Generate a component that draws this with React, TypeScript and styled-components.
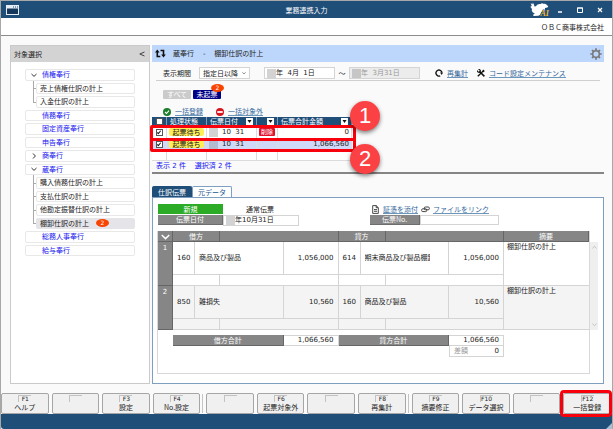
import React from "react";
import styled, { createGlobalStyle, css } from "styled-components";

const navy = "#1f4e79";
const grey = "#868686";
const line = "#d4d4d4";
const red = "#f8000c";
const sans = '"DejaVu Sans", "Noto Sans CJK JP", sans-serif';
const cjk = '"Noto Sans CJK JP", sans-serif';

const GlobalStyle = createGlobalStyle`
  *, *::before, *::after { box-sizing: border-box; }
  html, body { margin: 0; }
  body { font: 7px/10px ${cjk}; color: #222; background: #fafafa; }
  button, input, select { font: inherit; color: inherit; margin: 0; padding: 0; border: 0; border-radius: 0; background: none; }
  ul { list-style: none; margin: 0; padding: 0; }
  table { border-collapse: separate; border-spacing: 0; table-layout: fixed; }
  th, td { padding: 0; font-weight: 400; }
  svg { display: block; flex: none; }
`;

const Shell = styled.div`
  min-height: 100vh;
  display: flex;
  flex-direction: column;
  border: solid #a8a8a8;
  border-width: 1px 1px 0;
  background: #fafafa;
`;

const TitleBar = styled.header`
  display: grid;
  grid-template-columns: 1fr auto 1fr;
  align-items: center;
  height: 17px;
  padding: 0 2px;
  background: ${navy};
  color: #fff;
`;

const AppMark = styled.span`
  padding-left: 3px;
`;

const Title = styled.h1`
  margin: 0;
  font: inherit;
`;

const WindowTools = styled.div`
  display: flex;
  justify-content: flex-end;
  align-items: center;
`;

const WindowButton = styled.button`
  display: grid;
  place-items: center;
  width: 20px;
  height: 12px;
`;

const CompanyBar = styled.div`
  height: 18px;
  padding: 4px 8px 0;
  text-align: right;
  background: #fff;
  border-bottom: 1px solid #8c8c8c;
`;

const Main = styled.main`
  flex: 1;
  display: flex;
  gap: 2px;
  padding: 9px 8px 9px 9px;
`;

const Sidebar = styled.nav`
  width: 140px;
  border: 1px solid #cacaca;
  background: #fff;
`;

const SidebarHead = styled.div`
  display: flex;
  justify-content: space-between;
  align-items: center;
  height: 16px;
  padding: 0 4px 0 3px;
  background: #d3d3d3;
`;

const Tree = styled.ul`
  display: grid;
  grid-auto-rows: 1fr;
  gap: 2px;
  height: 187px;
  margin: 7px 14px 0;
`;

const TreeItem = styled.li<{ $child: boolean; $first: boolean }>`
  position: relative;
  display: flex;
  ${(p) =>
    p.$child &&
    css`
      margin-left: 11px;
      &::before {
        content: "";
        position: absolute;
        left: -3px;
        top: ${p.$first ? "-2px" : "-7px"};
        bottom: 5px;
        width: 3px;
        border: solid #aaa;
        border-width: 0 0 1px 1px;
      }
    `}
`;

const TreeButton = styled.button<{ $child: boolean; $active: boolean }>`
  flex: 1;
  display: flex;
  align-items: center;
  gap: ${(p) => (p.$child ? "7px" : "0")};
  padding-left: ${(p) => (p.$child ? "3px" : "5px")};
  border: 1px solid ${(p) => (p.$active ? "#e4e4e9" : "#e8e8e8")};
  border-radius: 2px;
  background: ${(p) => (p.$active ? "#e4e4e9" : "#fff")};
  color: ${(p) => (p.$child ? "#222" : "#1414f0")};
  text-align: left;
  line-height: 9px;
  white-space: nowrap;
`;

const TreeMark = styled.span`
  width: 11px;
`;

const Badge = styled.span`
  width: 13px;
  height: 8px;
  border-radius: 50%;
  background: #f84400;
  color: #fff;
  font-family: ${sans};
  font-size: 6px;
  line-height: 8px;
  text-align: center;
`;

const TabBadge = styled(Badge)`
  position: absolute;
  right: -3px;
  top: -6px;
`;

const Work = styled.section`
  flex: 1;
  min-width: 0;
  display: flex;
  flex-direction: column;
`;

const WorkHead = styled.div`
  display: flex;
  align-items: center;
  height: 17px;
  padding: 0 2px 0 3px;
  background: #bdd7fc;
`;

const WorkTitle = styled.h2`
  flex: 1;
  margin: 0 7px;
  font: inherit;
  font-family: ${sans};
  white-space: pre;
`;

const Filter = styled.div`
  display: flex;
  align-items: center;
  margin: 0 4px;
  padding: 5px 0 1px 7px;
  border-bottom: 1px solid #cfcfcf;
`;

const SelectBox = styled.span`
  display: flex;
  align-items: center;
  width: 51px;
  height: 12px;
  margin: 0 14px 0 8px;
  padding-right: 3px;
  border: 1px solid ${line};
  background: #fff;
`;

const Select = styled.select`
  flex: 1;
  min-width: 0;
  height: 10px;
  padding-left: 3px;
  appearance: none;
  outline: none;
`;

const DateBox = styled.span<{ $off?: boolean; $w: number; $h?: number }>`
  display: flex;
  align-items: center;
  width: ${(p) => p.$w}px;
  height: ${(p) => p.$h ?? 12}px;
  padding: 0 2px;
  border: 1px solid ${line};
  background: ${(p) => (p.$off ? "#ececec" : "#fff")};
  color: ${(p) => (p.$off ? "#999" : "#222")};
`;

const Mask = styled.span`
  flex: none;
  width: 9px;
  height: 9px;
  background: rgba(120, 120, 125, 0.33);
`;

const TextInput = styled.input`
  flex: 1;
  min-width: 0;
  width: 100%;
  height: 10px;
  font-family: ${sans};
  outline: none;
`;

const Wave = styled.span`
  width: 14px;
  text-align: center;
`;

const IconLink = styled.a<{ $gap?: number }>`
  display: inline-flex;
  align-items: center;
  gap: ${(p) => p.$gap ?? 4}px;
  color: #33689c;
  text-decoration: none;
  white-space: nowrap;
  span { border-bottom: 1px solid #6d96bb; line-height: 8px; }
`;

const FilterLinks = styled.div`
  display: flex;
  gap: 9px;
  margin-left: 15px;
`;

const StatusTabs = styled.div`
  display: flex;
  gap: 2px;
  margin: 9px 0 0 11px;
`;

const StatusTab = styled.button<{ $on?: boolean }>`
  position: relative;
  width: 28px;
  height: 9px;
  border-radius: 1px;
  background: ${(p) => (p.$on ? "#000087" : "#cbcbcb")};
  color: #fff;
  line-height: 9px;
`;

const Actions = styled.div`
  display: flex;
  gap: 13px;
  height: 11px;
  margin: 7px 0 0 11px;
`;

const ListArea = styled.div`
  border-bottom: 2px solid #858585;
`;

const ListWrap = styled.div`
  position: relative;
  width: 200px;
`;

const List = styled.table`
  width: 100%;
  font-family: ${sans};
`;

const ListTh = styled.th`
  height: 9px;
  padding: 0 3px;
  overflow: hidden;
  background: ${navy};
  color: #fff;
  font-family: ${cjk};
  line-height: 9px;
  text-align: left;
  border-right: 1px solid #7f9cb8;
`;

const ThRow = styled.span`
  display: flex;
  align-items: center;
  justify-content: space-between;
  height: 9px;
`;

const FilterButton = styled.button`
  display: grid;
  place-items: center;
  width: 7px;
  height: 7px;
  margin-left: auto;
  background: #fff;
`;

const ListTr = styled.tr<{ $h: number; $on?: boolean }>`
  height: ${(p) => p.$h}px;
  background: ${(p) => (p.$on ? "#cfd8f6" : "#fff")};
`;

const ListTd = styled.td<{ $right?: boolean }>`
  padding: 0 2px;
  border-right: 1px solid #dcdcdc;
  border-bottom: 1px solid #dcdcdc;
  line-height: 8px;
  text-align: ${(p) => (p.$right ? "right" : "left")};
`;

const Check = styled.input`
  display: block;
  appearance: none;
  position: relative;
  width: 7px;
  height: 7px;
  margin: 0 auto;
  border: 1px solid #555;
  background: #fff;
  &:checked::before {
    content: "";
    position: absolute;
    left: 1px;
    top: 0;
    width: 2px;
    height: 4px;
    border: solid #111;
    border-width: 0 1px 1px 0;
    transform: rotate(40deg);
  }
`;

const Waiting = styled.span`
  display: block;
  height: 8px;
  border-radius: 2px;
  background: #ffee57;
  font-family: ${cjk};
  line-height: 8px;
  text-align: center;
`;

const Day = styled.span`
  display: flex;
  align-items: center;
  gap: 4px;
  white-space: pre;
`;

const Deleted = styled.span`
  display: block;
  width: 16px;
  height: 8px;
  border-radius: 1px;
  background: #e0122c;
  color: #fff;
  font-family: ${cjk};
  font-size: 6px;
  line-height: 8px;
  text-align: center;
`;

const ListFoot = styled.p`
  margin: 0;
  padding-left: 4px;
  color: #1414f0;
  font-family: ${sans};
  line-height: 11px;
  white-space: pre;
`;

const Highlight = styled.span<{ $top: number; $h: number }>`
  position: absolute;
  left: -2px;
  right: -4px;
  top: ${(p) => p.$top}px;
  height: ${(p) => p.$h}px;
  border: 3px solid ${red};
  border-radius: 2px;
  pointer-events: none;
`;

const Callout = styled.span<{ $top: number }>`
  position: absolute;
  left: 198px;
  top: ${(p) => p.$top}px;
  width: 30px;
  height: 30px;
  border-radius: 50%;
  background: #fb4144;
  box-shadow: 0 2px 4px rgba(0, 0, 0, 0.5);
  color: #fff;
  font: 22px/30px "Liberation Sans", sans-serif;
  text-align: center;
`;

const Tabs = styled.div`
  display: flex;
  margin-top: 12px;
`;

const Tab = styled.button<{ $on?: boolean }>`
  width: 40px;
  height: 11px;
  border: 1px solid ${(p) => (p.$on ? navy : "#7f9fc0")};
  border-bottom: 0;
  border-radius: 2px 2px 0 0;
  background: ${(p) => (p.$on ? navy : "#fff")};
  color: ${(p) => (p.$on ? "#fff" : "#24588f")};
  line-height: 10px;
`;

const Panel = styled.div`
  flex: 1;
  display: flex;
  flex-direction: column;
  padding: 6px 5px 9px 4px;
  border: 1px solid #7f9fc0;
  background: #fff;
`;

const Form = styled.div`
  display: grid;
  grid-template-columns: 65px 76px 1fr 50px 79px 99px;
  grid-auto-rows: 10px;
  row-gap: 1px;
  margin-left: 1px;
  align-items: center;
`;

const Tag = styled.span`
  height: 10px;
  background: #2bab26;
  color: #fff;
  line-height: 10px;
  text-align: center;
`;

const TagLabel = styled.label`
  height: 10px;
  border: solid #6d6d6d;
  border-width: 0 1px 1px 0;
  background: ${grey};
  color: #fff;
  line-height: 9px;
  text-align: center;
`;

const SlipKind = styled.span`
  padding-left: 23px;
`;

const Attach = styled.span`
  grid-column: 4 / -1;
  display: flex;
  gap: 3px;
  padding-left: 2px;
`;

const VoucherNo = styled(TextInput)`
  border: 1px solid ${line};
`;

const DateCell = styled.span`
  grid-column: 2;
  display: flex;
`;

const Spacer = styled.span``;

const Detail = styled.div`
  flex: 1;
  display: flex;
  margin-top: 6px;
`;

const Frame = styled.div`
  flex: 1;
  min-width: 0;
  border: solid #d8d8d8;
  border-width: 0 1px 1px;
`;

const Ledger = styled.table`
  width: 100%;
  font-family: ${sans};
`;

const LedgerTh = styled.th`
  height: 11px;
  border: solid #666;
  border-width: 0 1px 1px 0;
  background: ${grey};
  color: #fff;
  font-family: ${cjk};
  line-height: 10px;
  text-align: center;
  svg { margin: 0 auto; }
`;

const RowNo = styled.th`
  padding-top: 2px;
  border: solid #666;
  border-width: 0 1px 1px 0;
  background: ${grey};
  color: #fff;
  line-height: 8px;
  vertical-align: top;
`;

const Cell = styled.td<{ $right?: boolean; $h?: number }>`
  height: ${(p) => p.$h ?? 33}px;
  padding: 0 4px;
  overflow: hidden;
  border: solid ${line};
  border-width: 0 1px 1px 0;
  text-align: ${(p) => (p.$right ? "right" : "left")};
  white-space: nowrap;
`;

const AccountName = styled.span`
  display: block;
  margin-right: 14px;
  overflow: hidden;
`;

const Note = styled.td`
  padding: 0 3px;
  border-bottom: 1px solid ${line};
  font-family: ${cjk};
  line-height: 9px;
  vertical-align: top;
`;

const Entry = styled.tbody<{ $shade?: boolean }>`
  background: ${(p) => (p.$shade ? "#f4f4f4" : "#fff")};
`;

const Totals = styled.table`
  width: 100%;
  margin-top: 5px;
  font-family: ${sans};
`;

const TotalTd = styled.td<{ $blank?: boolean }>`
  height: 11px;
  padding: 0 4px;
  border: solid ${line};
  border-width: ${(p) => (p.$blank ? "0" : "1px 1px 1px 0")};
  line-height: 9px;
  text-align: right;
`;

const Difference = styled(TotalTd)`
  border-width: 0 1px 1px;
`;

const DiffRow = styled.span`
  display: flex;
  justify-content: space-between;
  span { color: #999; }
`;

const Scrollbar = styled.div`
  display: flex;
  flex-direction: column;
  justify-content: space-between;
  align-items: center;
  width: 8px;
  height: 88px;
  margin-top: 11px;
  padding: 3px 0;
  background: #efefef;
`;

const KeyBar = styled.div`
  display: flex;
  padding: 0 1px 0 0;
`;

const KeyGroup = styled.div`
  flex: 1;
  display: flex;
  gap: 3px;
  & + & {
    margin-left: 6px;
    position: relative;
  }
  & + &::before {
    content: "";
    position: absolute;
    left: -4px;
    top: 1px;
    bottom: 1px;
    border-left: 1px solid #c4c4c4;
  }
`;

const KeySlot = styled.div`
  position: relative;
  flex: 1;
  display: flex;
`;

const Key = styled.button`
  flex: 1;
  display: flex;
  flex-direction: column;
  align-items: center;
  height: 21px;
  padding-top: 1px;
  border: 1px solid #a6a6a6;
  border-radius: 2px;
  background: #f0f0f0;
  line-height: 10px;
`;

const KeyCap = styled.span`
  width: 13px;
  height: 7px;
  border: solid #c2c2c2;
  border-width: 1px 0 0 1px;
  font-family: ${sans};
  font-size: 6px;
  line-height: 6px;
  text-align: center;
`;

const KeyText = styled.span``;

const KeyHighlight = styled.span`
  position: absolute;
  inset: -3px -1px -3px -3px;
  border: 3px solid ${red};
  border-radius: 4px;
  pointer-events: none;
`;

const StatusBar = styled.footer`
  display: flex;
  justify-content: flex-end;
  align-items: flex-end;
  height: 15px;
  background: ${navy};
  border-radius: 0 0 3px 3px;
`;

const Chevron = ({ dir, color = "#333", size = 6, w = 1 }: { dir: "down" | "right" | "left" | "up"; color?: string; size?: number; w?: number }) => {
  const d = { down: "M0.5 2l2.5 2.4L5.500 2", up: "M0.5 4l2.500-2.400L5.500 4", right: "M2 .5l2.400 2.500L2 5.500", left: "M5.500 1L.8 3l4.700 2" }[dir];
  return (
    <svg width={size} height={size} viewBox="0 0 6 6" fill="none" stroke={color} strokeWidth={w}>
      <path d={d} />
    </svg>
  );
};

const AppIcon = () => (
  <svg width="13" height="10" viewBox="0 0 13 10">
    <rect x=".5" y=".5" width="12" height="9" fill="#14395c" stroke="#e6edf4" />
    <path d="M1 1h11v2.500H1z" fill="#e6edf4" />
    <path d="M7 2h1M9 2h1M11 2h1" stroke={navy} />
  </svg>
);

const BearIcon = () => (
  <svg width="20" height="15" viewBox="0 0 20 15">
    <path
      d="M.6 1.200l2 1.100L2.800.6l1.100 2L4.500 4.500 6 4.200C7 2.500 8.500 1.800 10.500 2c1-.9 2.200-1 2.700-.2 1.700-.3 3.200.2 3.700 1.400l1.400.7-.8 1.500-2.500.6c-.2 1.700.2 2.200.3 2.500l-4 1.500-1 2.700-1.900 1-4.600.3-.9-1 1.900-1.400C1.800 10 1.300 8.500 2 7L.3 4.800l1.500-.9z"
      fill="#fff"
    />
    <text
      x="10.500"
      y="14.300"
      fill="#f2b632"
      stroke={navy}
      strokeWidth="1"
      paintOrder="stroke"
      fontFamily="Liberation Serif, serif"
      fontStyle="italic"
      fontWeight="700"
      fontSize="8"
    >
      AI
    </text>
  </svg>
);

const SwapIcon = () => (
  <svg width="11" height="9" viewBox="0 0 11 9" fill="none" stroke="#111" strokeWidth="1.600">
    <path d="M2.300 2.500v5h3M5.500 1.500h3v5" />
    <path d="M0 3.500L2.300.5l2.300 3zM6.200 5.500h4.600L8.500 8.500z" fill="#111" stroke="none" />
  </svg>
);

const GearIcon = () => (
  <svg width="12" height="12" viewBox="0 0 12 12" fill="none" stroke="#777">
    <circle cx="6" cy="6" r="3.300" strokeWidth="1.500" />
    <path
      d="M6 .3v2M6 9.700v2M.3 6h2M9.700 6h2M2 2l1.400 1.400M8.600 8.600L10 10M10 2L8.600 3.400M3.400 8.600L2 10"
      strokeWidth="1.700"
    />
  </svg>
);

const ReloadIcon = () => (
  <svg width="8" height="8" viewBox="0 0 8 8" fill="none" stroke="#111" strokeWidth="1.400">
    <path d="M5.200 6.800A3 3 0 1 1 6.900 3.500" />
    <path d="M5 3.400h3L6.800 6z" fill="#111" stroke="none" />
  </svg>
);

const ToolsIcon = () => (
  <svg width="8" height="8" viewBox="0 0 8 8" fill="none" stroke="#111">
    <path d="M2.300 2.300L7.400 7.400" strokeWidth="1.500" />
    <path d="M.5 1.500a1.600 1.600 0 0 0 2.300 1.700M1.500.5a1.600 1.600 0 0 1 1.700 2.300" strokeWidth="1.100" />
    <path d="M.8 7.300L5 3.200" strokeWidth="1.300" />
    <path d="M4.500 2.500L6.600.4l1.100 1.800L5.600 3.700z" fill="#111" stroke="none" />
  </svg>
);

const OkIcon = () => (
  <svg width="8" height="8" viewBox="0 0 8 8" fill="none">
    <circle cx="4" cy="4" r="4" fill="#1b7e2c" />
    <path d="M2 4l1.500 1.500L6 2.700" stroke="#fff" strokeWidth="1.100" />
  </svg>
);

const StopIcon = () => (
  <svg width="8" height="8" viewBox="0 0 8 8">
    <circle cx="4" cy="4" r="4" fill="#d9141e" />
    <path d="M1.300 3.100h5.400v1.800H1.300z" fill="#fff" />
  </svg>
);

const DocIcon = () => (
  <svg width="7" height="9" viewBox="0 0 7 9" fill="none" stroke="#333" strokeWidth=".9">
    <path d="M.7.600h3.500L6.300 2.700v5.700H.7zM4.200.6v2.100h2.100M2 4.600h3M2 6.300h3" />
  </svg>
);

const ChainIcon = () => (
  <svg width="9" height="7" viewBox="0 0 9 7" fill="none" stroke="#444" strokeWidth="1">
    <rect x="3.300" y="1" width="5" height="2.800" rx="1" />
    <rect x=".7" y="2.800" width="5" height="2.800" rx="1" />
  </svg>
);

const Funnel = ({ name }: { name: string }) => (
  <FilterButton aria-label={name}>
    <svg width="5" height="3" viewBox="0 0 5 3"><path d="M.5 0h4l-2 3z" fill="#111" /></svg>
  </FilterButton>
);

type Node = { text: string; child?: boolean; mark?: "down" | "right"; count?: number };

const nodes: Node[] = [
  { text: "債権奉行", mark: "down" },
  { text: "売上債権仕訳の計上", child: true },
  { text: "入金仕訳の計上", child: true },
  { text: "債務奉行" },
  { text: "固定資産奉行" },
  { text: "申告奉行" },
  { text: "商奉行", mark: "right" },
  { text: "蔵奉行", mark: "down" },
  { text: "購入債務仕訳の計上", child: true },
  { text: "支払仕訳の計上", child: true },
  { text: "他勘定振替仕訳の計上", child: true },
  { text: "棚卸仕訳の計上", child: true, count: 2 },
  { text: "総務人事奉行" },
  { text: "給与奉行" },
];

const entries = [
  { no: 1, debit: ["160", "商品及び製品", "1,056,000"], credit: ["614", "期末商品及び製品棚卸", "1,056,000"], note: "棚卸仕訳の計上" },
  { no: 2, debit: ["850", "雑損失", "10,560"], credit: ["160", "商品及び製品", "10,560"], note: "棚卸仕訳の計上" },
];

const keyGroups = [
  [["F1", "ヘルプ"], ["", ""], ["F3", "設定"], ["F4", "No.設定"]],
  [["", ""], ["F6", "起票対象外"], ["", ""], ["F8", "再集計"]],
  [["F9", "摘要修正"], ["F10", "データ選択"], ["", ""], ["F12", "一括登録"]],
];

const Cols = ({ widths }: { widths: (number | undefined)[] }) => (
  <colgroup>
    {widths.map((w, i) => (
      <col key={i} width={w} />
    ))}
  </colgroup>
);

const SlipRow = ({ height, on, deleted, amount }: { height: number; on?: boolean; deleted?: boolean; amount: string }) => (
  <ListTr $h={height} $on={on}>
    <ListTd><Check type="checkbox" defaultChecked aria-label={`伝票 ${amount}`} /></ListTd>
    <ListTd><Waiting>起票待ち</Waiting></ListTd>
    <ListTd><Day><Mask />10  31</Day></ListTd>
    <ListTd>{deleted && <Deleted>削除</Deleted>}</ListTd>
    <ListTd $right>{amount}</ListTd>
  </ListTr>
);

export default function App() {
  return (
    <Shell>
      <GlobalStyle />
      <TitleBar>
        <AppMark><AppIcon /></AppMark>
        <Title>業務連携入力</Title>
        <WindowTools>
          <BearIcon />
          <WindowButton aria-label="最小化">
            <svg width="6" height="6"><path d="M1 5h4" stroke="#fff" strokeWidth="1.500" /></svg>
          </WindowButton>
          <WindowButton aria-label="最大化">
            <svg width="6" height="6"><path d="M.5 1h5v4.500h-5z" fill="none" stroke="#fff" /><path d="M0 1h6" stroke="#fff" /></svg>
          </WindowButton>
          <WindowButton aria-label="閉じる">
            <svg width="6" height="6"><path d="M1 1l4 4M5 1L1 5" stroke="#fff" strokeWidth="1.200" /></svg>
          </WindowButton>
        </WindowTools>
      </TitleBar>
      <CompanyBar>ＯＢＣ商事株式会社</CompanyBar>

      <Main>
        <Sidebar>
          <SidebarHead>
            対象選択
            <Chevron dir="left" color="#444" />
          </SidebarHead>
          <Tree>
            {nodes.map((n, i) => (
              <TreeItem key={n.text} $child={!!n.child} $first={!nodes[i - 1]?.child}>
                <TreeButton $child={!!n.child} $active={!!n.count}>
                  {!n.child && <TreeMark>{n.mark && <Chevron dir={n.mark} />}</TreeMark>}
                  {n.text}
                  {n.count && <Badge>{n.count}</Badge>}
                </TreeButton>
              </TreeItem>
            ))}
          </Tree>
        </Sidebar>

        <Work>
          <WorkHead>
            <SwapIcon />
            <WorkTitle>{"蔵奉行    -    棚卸仕訳の計上"}</WorkTitle>
            <GearIcon />
          </WorkHead>

          <Filter>
            <label htmlFor="range">表示期間</label>
            <SelectBox>
              <Select id="range"><option>指定日以降</option></Select>
              <Chevron dir="down" color="#555" size={4} w={1} />
            </SelectBox>
            <DateBox $w={71}><Mask /><TextInput aria-label="開始日" defaultValue="年  4月  1日" /></DateBox>
            <Wave>～</Wave>
            <DateBox $w={71} $off><Mask /><TextInput aria-label="終了日" disabled defaultValue="年  3月31日" /></DateBox>
            <FilterLinks>
              <IconLink href="#recount"><ReloadIcon /><span>再集計</span></IconLink>
              <IconLink href="#codes"><ToolsIcon /><span>コード設定メンテナンス</span></IconLink>
            </FilterLinks>
          </Filter>

          <StatusTabs>
            <StatusTab>すべて</StatusTab>
            <StatusTab $on>未起票<TabBadge>2</TabBadge></StatusTab>
          </StatusTabs>
          <Actions>
            <IconLink href="#register"><OkIcon /><span>一括登録</span></IconLink>
            <IconLink href="#exclude"><StopIcon /><span>一括対象外</span></IconLink>
          </Actions>

          <ListArea>
            <ListWrap>
              <List>
                <Cols widths={[15, 40, 50, 21, undefined]} />
                <thead>
                  <tr>
                    <ListTh><Check type="checkbox" aria-label="すべて選択" /></ListTh>
                    <ListTh>処理状態</ListTh>
                    <ListTh><ThRow>伝票日付<Funnel name="伝票日付で絞り込み" /></ThRow></ListTh>
                    <ListTh><ThRow><Funnel name="区分で絞り込み" /></ThRow></ListTh>
                    <ListTh><ThRow>伝票合計金額<Funnel name="金額で絞り込み" /></ThRow></ListTh>
                  </tr>
                </thead>
                <tbody>
                  <SlipRow height={13} deleted amount="0" />
                  <SlipRow height={11} on amount="1,066,560" />
                  <ListTr $h={11}><ListTd /><ListTd /><ListTd /><ListTd /><ListTd /></ListTr>
                </tbody>
              </List>
              <ListFoot>{"表示 2 件    選択済 2 件"}</ListFoot>
              <Highlight $top={8} $h={16} />
              <Highlight $top={21} $h={14} />
              <Callout $top={-16}>1</Callout>
              <Callout $top={27}>2</Callout>
            </ListWrap>
          </ListArea>

          <Tabs>
            <Tab $on>仕訳伝票</Tab>
            <Tab>元データ</Tab>
          </Tabs>
          <Panel>
            <Form>
              <Tag>新規</Tag>
              <SlipKind>通常伝票</SlipKind>
              <Attach>
                <IconLink href="#attach"><DocIcon /><span>証憑を添付</span></IconLink>
                <IconLink href="#link" $gap={3}><ChainIcon /><span>ファイルをリンク</span></IconLink>
              </Attach>
              <TagLabel htmlFor="slip-date">伝票日付</TagLabel>
              <DateCell>
                <DateBox $w={76} $h={11}><Mask /><TextInput id="slip-date" defaultValue="年10月31日" /></DateBox>
              </DateCell>
              <Spacer />
              <TagLabel htmlFor="slip-no">伝票No.</TagLabel>
              <VoucherNo id="slip-no" />
            </Form>

            <Detail>
              <Frame>
                <Ledger>
                  <Cols widths={[15, 22, 25, undefined, 55, 22, 25, undefined, 55, 85]} />
                  <thead>
                    <tr>
                      <LedgerTh><Chevron dir="down" color="#fff" size={9} w={1} /></LedgerTh>
                      <LedgerTh colSpan={2}>借方</LedgerTh>
                      <LedgerTh colSpan={2} />
                      <LedgerTh colSpan={2}>貸方</LedgerTh>
                      <LedgerTh colSpan={2} />
                      <LedgerTh>摘要</LedgerTh>
                    </tr>
                  </thead>
                  {entries.map((e, i) => (
                    <Entry key={e.no} $shade={i % 2 === 1}>
                      <tr>
                        <RowNo rowSpan={2}>{e.no}</RowNo>
                        {[e.debit, e.credit].map((side, k) => (
                          <React.Fragment key={k}>
                            <Cell>{side[0]}</Cell>
                            <Cell colSpan={2}><AccountName>{side[1]}</AccountName></Cell>
                            <Cell $right>{side[2]}</Cell>
                          </React.Fragment>
                        ))}
                        <Note rowSpan={2}>{e.note}</Note>
                      </tr>
                      <tr>
                        <Cell $h={11} colSpan={2} />
                        <Cell $h={11} colSpan={2} />
                        <Cell $h={11} colSpan={2} />
                        <Cell $h={11} colSpan={2} />
                      </tr>
                    </Entry>
                  ))}
                </Ledger>
                <Totals>
                  <Cols widths={[15, undefined, 55, undefined, 55, 85]} />
                  <tbody>
                    <tr>
                      <TotalTd $blank />
                      <LedgerTh>借方合計</LedgerTh>
                      <TotalTd>1,066,560</TotalTd>
                      <LedgerTh>貸方合計</LedgerTh>
                      <TotalTd>1,066,560</TotalTd>
                      <TotalTd $blank />
                    </tr>
                    <tr>
                      <TotalTd $blank colSpan={4} />
                      <Difference><DiffRow><span>差額</span>0</DiffRow></Difference>
                      <TotalTd $blank />
                    </tr>
                  </tbody>
                </Totals>
              </Frame>
              <Scrollbar>
                <Chevron dir="up" color="#bbb" size={5} />
                <Chevron dir="down" color="#bbb" size={5} />
              </Scrollbar>
            </Detail>
          </Panel>
        </Work>
      </Main>

      <KeyBar>
        {keyGroups.map((group, g) => (
          <KeyGroup key={g}>
            {group.map(([cap, text], i) => (
              <KeySlot key={i}>
                <Key aria-label={text || "未割り当て"}>
                  <KeyCap>{cap}</KeyCap>
                  <KeyText>{text}</KeyText>
                </Key>
                {cap === "F12" && <KeyHighlight />}
              </KeySlot>
            ))}
          </KeyGroup>
        ))}
      </KeyBar>
      <StatusBar>
        <svg width="6" height="6" viewBox="0 0 6 6"><path d="M6 0v6H0z" fill="#a9bfd4" /></svg>
      </StatusBar>
    </Shell>
  );
}
